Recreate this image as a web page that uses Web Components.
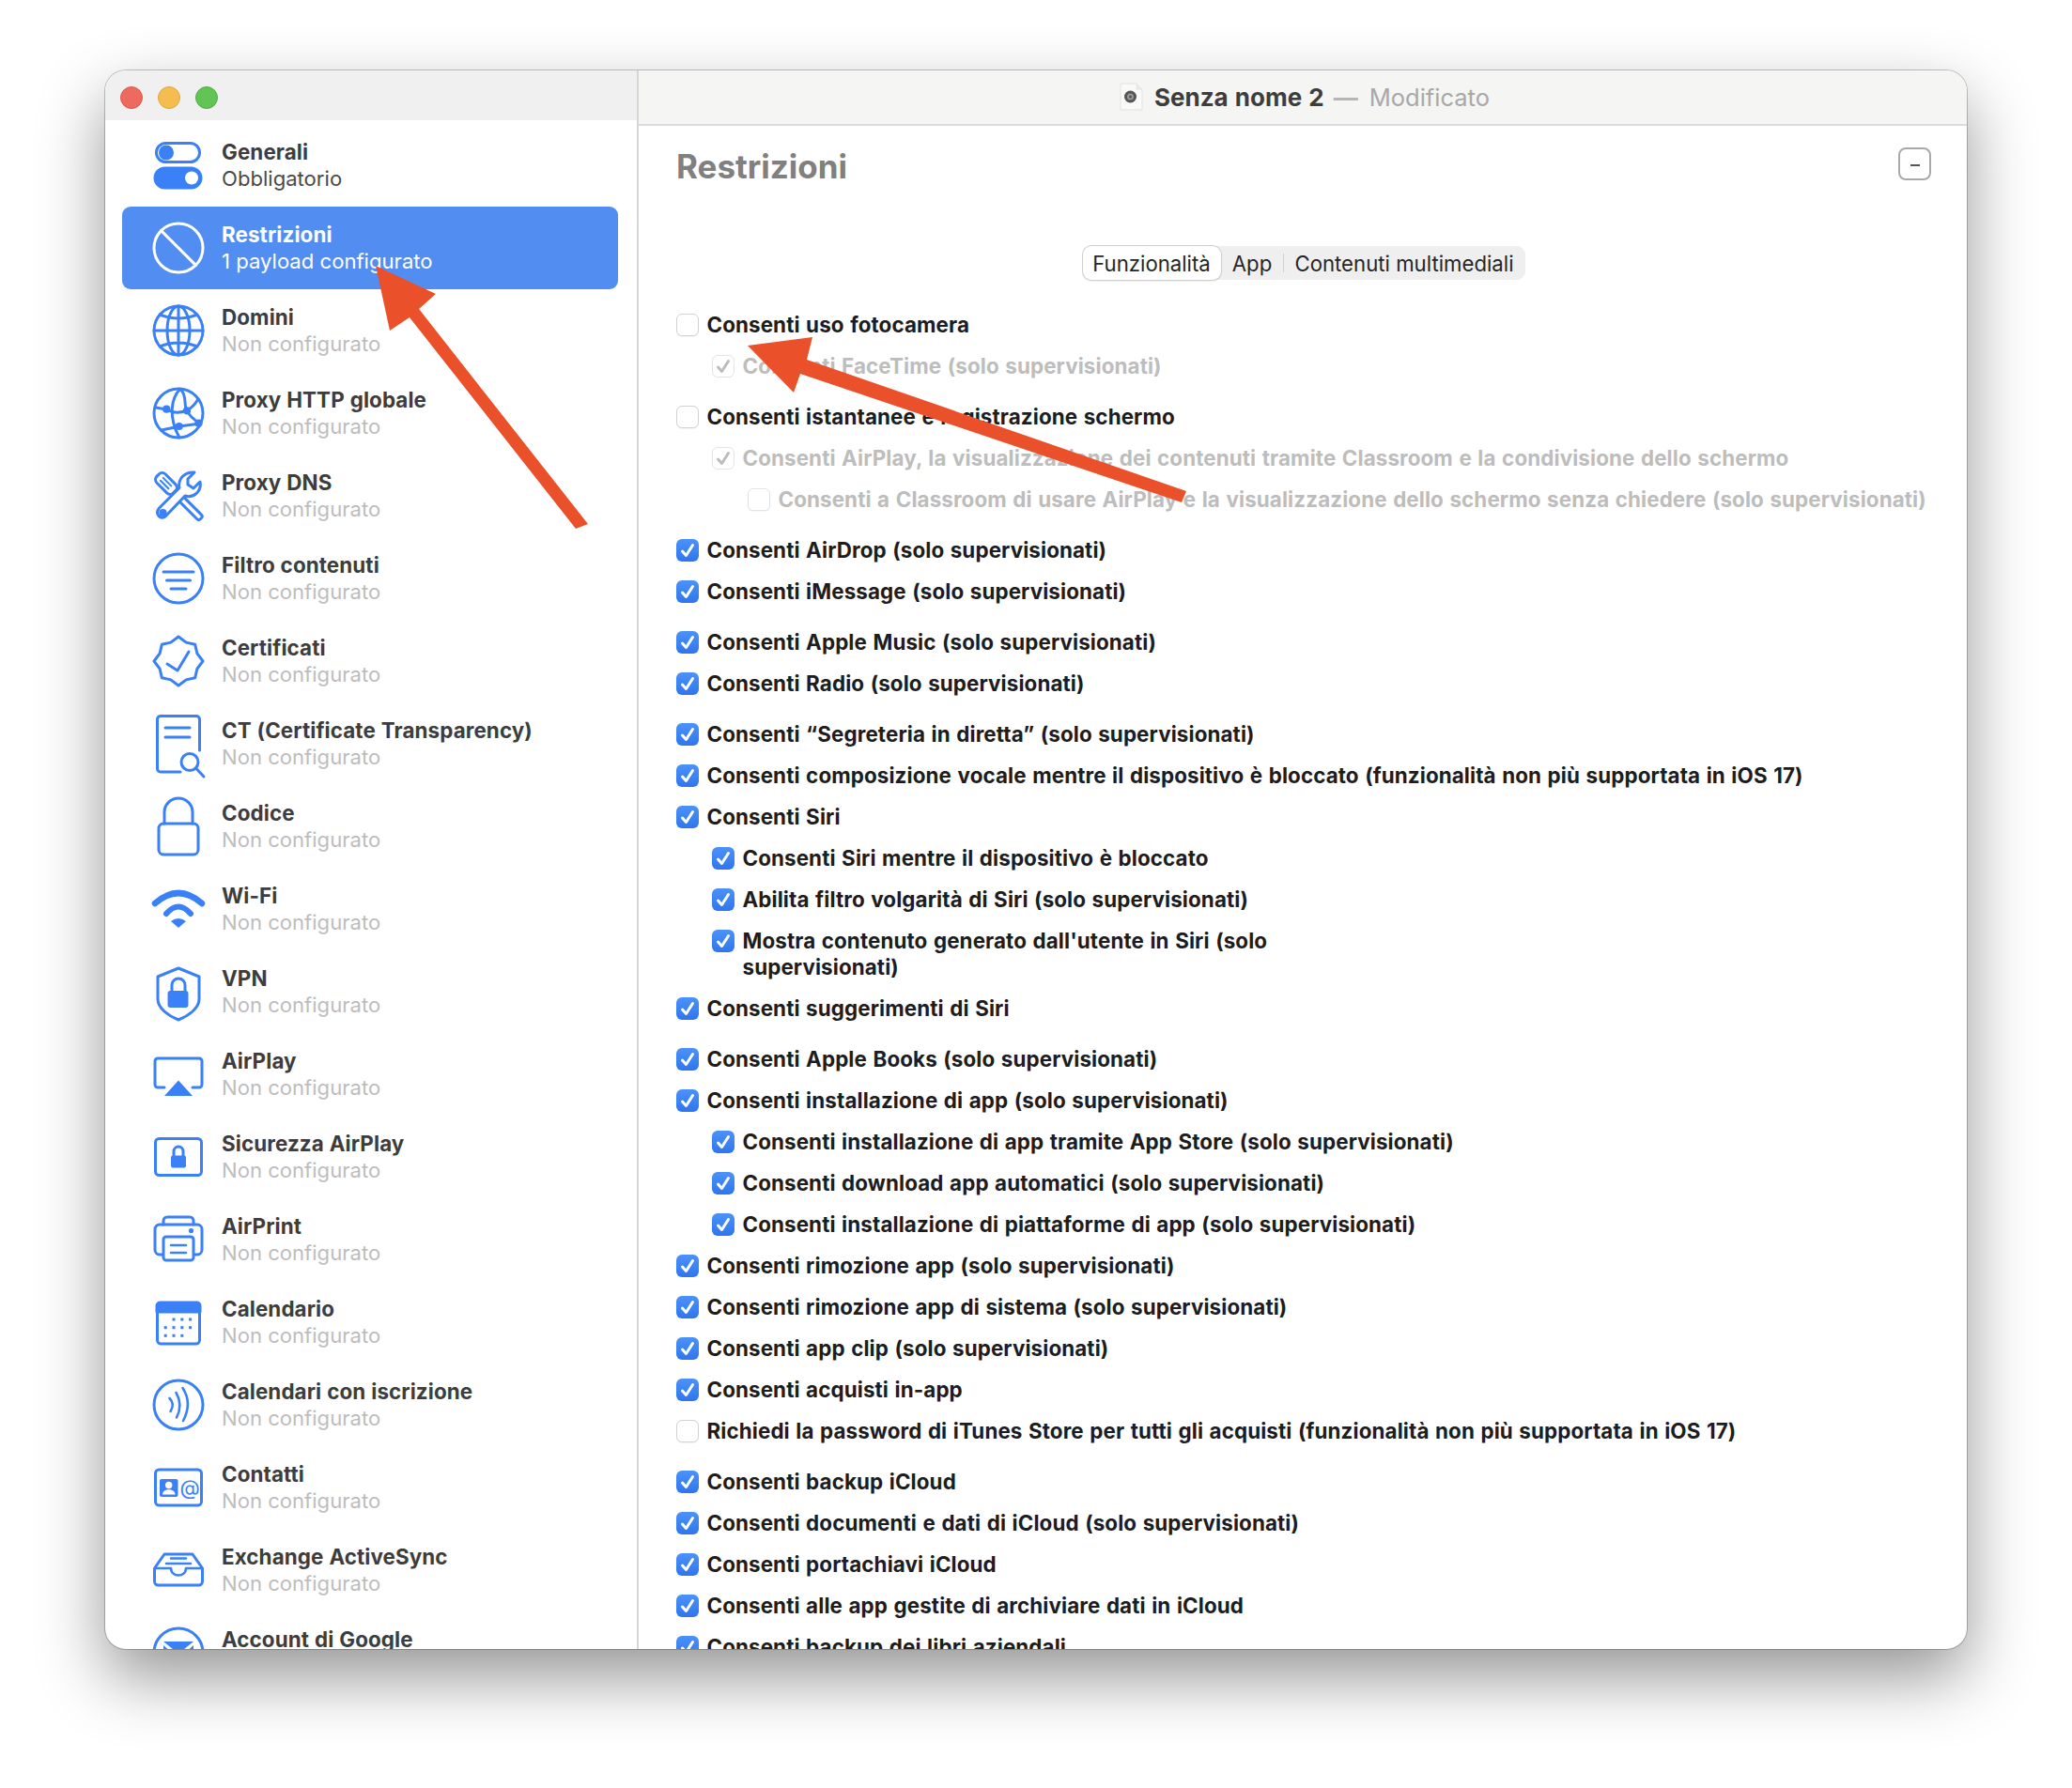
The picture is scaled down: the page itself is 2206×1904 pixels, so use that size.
<!DOCTYPE html>
<html lang="it">
<head>
<meta charset="utf-8">
<title>Senza nome 2</title>
<style>
  html, body { margin: 0; height: 1904px; background: #fff; overflow: hidden; }
  body { box-sizing: border-box; padding: 75px 0 0 112px; font-family: Inter, "Liberation Sans", sans-serif; }
</style>
</head>
<body>
<mac-window>
  <side-bar slot="side">
    <side-item icon="toggles" sub="Obbligatorio" strong>Generali</side-item>
    <side-item icon="nope" sub="1 payload configurato" selected>Restrizioni</side-item>
    <side-item icon="globe">Domini</side-item>
    <side-item icon="net">Proxy HTTP globale</side-item>
    <side-item icon="tools">Proxy DNS</side-item>
    <side-item icon="filter">Filtro contenuti</side-item>
    <side-item icon="badge">Certificati</side-item>
    <side-item icon="ct">CT (Certificate Transparency)</side-item>
    <side-item icon="lock">Codice</side-item>
    <side-item icon="wifi">Wi-Fi</side-item>
    <side-item icon="vpn">VPN</side-item>
    <side-item icon="airplay">AirPlay</side-item>
    <side-item icon="seclock">Sicurezza AirPlay</side-item>
    <side-item icon="print">AirPrint</side-item>
    <side-item icon="cal">Calendario</side-item>
    <side-item icon="subs">Calendari con iscrizione</side-item>
    <side-item icon="contact">Contatti</side-item>
    <side-item icon="tray">Exchange ActiveSync</side-item>
    <side-item icon="mail">Account di Google</side-item>
  </side-bar>
  <main-pane slot="main" heading="Restrizioni">
    <seg-control>
      <seg-item w="147" active>Funzionalità</seg-item>
      <seg-item w="67" sep>App</seg-item>
      <seg-item w="257">Contenuti multimediali</seg-item>
    </seg-control>
    <check-list>
      <check-row state="off">Consenti uso fotocamera</check-row>
      <check-row level="1" disabled>Consenti FaceTime (solo supervisionati)</check-row>
      <check-row state="off" group>Consenti istantanee e registrazione schermo</check-row>
      <check-row level="1" disabled>Consenti AirPlay, la visualizzazione dei contenuti tramite Classroom e la condivisione dello schermo</check-row>
      <check-row level="2" state="off" disabled>Consenti a Classroom di usare AirPlay e la visualizzazione dello schermo senza chiedere (solo supervisionati)</check-row>
      <check-row group>Consenti AirDrop (solo supervisionati)</check-row>
      <check-row>Consenti iMessage (solo supervisionati)</check-row>
      <check-row group>Consenti Apple Music (solo supervisionati)</check-row>
      <check-row>Consenti Radio (solo supervisionati)</check-row>
      <check-row group>Consenti “Segreteria in diretta” (solo supervisionati)</check-row>
      <check-row>Consenti composizione vocale mentre il dispositivo è bloccato (funzionalità non più supportata in iOS 17)</check-row>
      <check-row>Consenti Siri</check-row>
      <check-row level="1">Consenti Siri mentre il dispositivo è bloccato</check-row>
      <check-row level="1">Abilita filtro volgarità di Siri (solo supervisionati)</check-row>
      <check-row level="1" narrow>Mostra contenuto generato dall'utente in Siri (solo supervisionati)</check-row>
      <check-row>Consenti suggerimenti di Siri</check-row>
      <check-row group>Consenti Apple Books (solo supervisionati)</check-row>
      <check-row>Consenti installazione di app (solo supervisionati)</check-row>
      <check-row level="1">Consenti installazione di app tramite App Store (solo supervisionati)</check-row>
      <check-row level="1">Consenti download app automatici (solo supervisionati)</check-row>
      <check-row level="1">Consenti installazione di piattaforme di app (solo supervisionati)</check-row>
      <check-row>Consenti rimozione app (solo supervisionati)</check-row>
      <check-row>Consenti rimozione app di sistema (solo supervisionati)</check-row>
      <check-row>Consenti app clip (solo supervisionati)</check-row>
      <check-row>Consenti acquisti in-app</check-row>
      <check-row state="off">Richiedi la password di iTunes Store per tutti gli acquisti (funzionalità non più supportata in iOS 17)</check-row>
      <check-row group>Consenti backup iCloud</check-row>
      <check-row>Consenti documenti e dati di iCloud (solo supervisionati)</check-row>
      <check-row>Consenti portachiavi iCloud</check-row>
      <check-row>Consenti alle app gestite di archiviare dati in iCloud</check-row>
      <check-row>Consenti backup dei libri aziendali</check-row>
    </check-list>
  </main-pane>
</mac-window>
<arrow-overlay></arrow-overlay>

<script>
// Sidebar icons, all in a 56x64 box centred on the row
const ICONS = {
  toggles: `<rect x="4.500" y="8.500" width="46" height="20" rx="10"/>
    <circle cx="15" cy="18.500" r="6.500" class="f"/>
    <rect x="3" y="35" width="49" height="21" rx="10.500" class="f"/>
    <circle cx="42" cy="45.500" r="7" fill="#fff" stroke="none"/>`,
  nope: `<circle cx="28" cy="32" r="26"/><path d="M9.600 13.600 46.400 50.400"/>`,
  globe: `<circle cx="28" cy="32" r="26"/><ellipse cx="28" cy="32" rx="12" ry="26"/>
    <path d="M28 6V58M2 32H54M8 15Q28 23 48 15M8 49Q28 41 48 49"/>`,
  net: `<circle cx="28" cy="32" r="26"/>
    <path d="M30 6C20 16 17 36 29 58M30 6C38 14 33 24 37 29C40 36 46 40 51 43M4 26 15 28C22 32 30 32 37 29C41 27 46 22 49 17M10 50 29 46 51 43"/>
    <circle cx="15.300" cy="27.700" r="2.600" class="f"/><circle cx="37" cy="29.300" r="2.600" class="f"/>
    <circle cx="28.700" cy="46" r="2.600" class="f"/><circle cx="49.500" cy="42.700" r="2.600" class="f"/>`,
  tools: `<g transform="rotate(45 28 32)"><rect x="-3" y="25.500" width="25" height="13" rx="5"/>
      <rect x="22" y="29" width="40" height="6.500" rx="2.500"/><path d="M3 30H15M3 34H15" stroke-width="2"/></g>
    <path fill="#fff" d="M7.500 45 29 23.500C27 14 35 6 45 7L38 14V20L44 24 51 17C53 27 44 35 35 32L14 54C10 58 2 52 7.500 45Z"/>
    <circle cx="11.500" cy="50" r="2.600" class="f"/>`,
  filter: `<circle cx="28" cy="32" r="26"/><path d="M12 25H44M15.500 34H40.500M20 43H36"/>`,
  badge: `<path d="M28 6 36.200 12.100 45.700 14.300 47.900 23.800 54 32 47.900 40.200 45.700 49.700 36.200 51.900 28 58 19.800 51.900 10.300 49.700 8.100 40.200 2 32 8.100 23.800 10.300 14.300 19.800 12.100Z"/>
    <path d="M16 35 27 42 39 22" />`,
  ct: `<path d="M30 62H9A3.500 3.500 0 0 1 5.500 58.500V6A3.500 3.500 0 0 1 9 2.500H47A3.500 3.500 0 0 1 50.500 6V39"/>
    <path d="M14 15H40M14 25H40"/><circle cx="40" cy="51.500" r="9"/><path d="M47 58.500 55 67"/>`,
  lock: `<rect x="7" y="29" width="42" height="33" rx="5"/><path d="M13 29V17A15 15 0 0 1 43 17V29"/>`,
  wifi: `<path d="M3 26Q28 4 53 26" stroke-width="6.500"/><path d="M15 37Q28 22 41 37" stroke-width="6"/>
    <path d="M20 45Q28 39 36 45L28 52Z" class="f" stroke="none"/>`,
  vpn: `<path d="M28 7 50 16V40C50 50 38 58 28 62C18 58 6 50 6 40V16Z"/>
    <path d="M21 32V25A7 7 0 0 1 35 25V32"/><rect x="16.500" y="31" width="22" height="18" rx="3" class="f" stroke="none"/>`,
  airplay: `<path d="M13 46H6A3 3 0 0 1 3 43V18A3 3 0 0 1 6 15H50A3 3 0 0 1 53 18V43A3 3 0 0 1 50 46H43"/>
    <path d="M28 38.500 43 55H13Z" class="f" stroke="none"/>`,
  seclock: `<rect x="3.500" y="12.500" width="49" height="39" rx="4"/><path d="M23 31V26A5 5 0 0 1 33 26V31"/>
    <rect x="20" y="30.500" width="16" height="13" rx="2" class="f" stroke="none"/>`,
  print: `<path d="M12 16V12A4 4 0 0 1 16 8H40A4 4 0 0 1 44 12V16"/>
    <path d="M11 48H8A5 5 0 0 1 3 43V21A5 5 0 0 1 8 16H48A5 5 0 0 1 53 21V43A5 5 0 0 1 48 48H45"/>
    <rect x="12" y="29" width="32" height="25" rx="3"/><path d="M20 38H36M20 46H36" stroke-width="2.500"/>
    <circle cx="41.500" cy="22.500" r="2.600" class="f" stroke="none"/>`,
  cal: `<rect x="5.500" y="12" width="45" height="43" rx="4"/><path d="M5 21V14.500A3.500 3.500 0 0 1 8.500 11H47.500A3.500 3.500 0 0 1 51 14.500V21Z" class="f"/>
    <g class="f" stroke="none"><rect x="21.500" y="27.500" width="3" height="3"/><rect x="30.300" y="27.500" width="3" height="3"/><rect x="39.100" y="27.500" width="3" height="3"/>
    <rect x="12.700" y="36.200" width="3" height="3"/><rect x="21.500" y="36.200" width="3" height="3"/><rect x="30.300" y="36.200" width="3" height="3"/><rect x="39.100" y="36.200" width="3" height="3"/>
    <rect x="12.700" y="44.800" width="3" height="3"/><rect x="21.500" y="44.800" width="3" height="3"/><rect x="30.300" y="44.800" width="3" height="3"/></g>`,
  subs: `<circle cx="28" cy="32" r="26"/><path d="M18.500 25Q24.500 31 19.500 39M25.500 19Q33 32 26 45.500M32.500 14Q43 30 33 49" stroke-width="2.600"/>`,
  contact: `<rect x="3.500" y="13" width="49" height="38" rx="4"/><rect x="8" y="23" width="19.500" height="19" rx="2" class="f" stroke="none"/>
    <circle cx="17.700" cy="29.500" r="3.700" fill="#fff" stroke="none"/><path d="M11 39.500C11 32.500 24.500 32.500 24.500 39.500Z" fill="#fff" stroke="none"/>
    <text x="40" y="39.500" font-size="22" text-anchor="middle" stroke="none" class="f" font-family="Inter, sans-serif">@</text>`,
  tray: `<path d="M2.500 30 13 15H43L53.500 30V44A4 4 0 0 1 49.500 48H6.500A4 4 0 0 1 2.500 44Z"/>
    <path d="M3 30H20C20 40 36 40 36 30H53M20 19.500H36M15 25H41" stroke-width="2.600"/>`,
  mail: `<circle cx="28" cy="32" r="26"/><path d="M12 20H44L28 33Z" class="f" stroke="none"/><path d="M12 24V46H44V24L28 38Z" class="f" stroke="none"/>`
};

class MacWindow extends HTMLElement {
  constructor() {
    super();
    this.attachShadow({ mode: 'open' }).innerHTML = `
      <style>
        :host {
          display: flex;
          width: 1982px;
          height: 1681px;
          border-radius: 22px;
          overflow: hidden;
          background: #fff;
          box-shadow: 0 0 0 1px rgba(0,0,0,.22), 0 30px 70px rgba(0,0,0,.42);
        }
      </style>
      <slot name="side"></slot>
      <slot name="main"></slot>`;
  }
}

class SideBar extends HTMLElement {
  constructor() {
    super();
    this.attachShadow({ mode: 'open' }).innerHTML = `
      <style>
        :host {
          display: flex;
          flex-direction: column;
          flex: none;
          box-sizing: border-box;
          width: 568px;
          height: 100%;
          border-right: 2px solid #d6d6d6;
        }
        .bar {
          flex: none;
          display: flex;
          align-items: center;
          gap: 16px;
          box-sizing: border-box;
          height: 53px;
          padding: 4px 0 0 16px;
          background: #f0f0f0;
        }
        .bar i { width: 24px; height: 24px; border-radius: 50%; box-sizing: border-box; }
        .items { padding-top: 4px; }
      </style>
      <div class="bar">
        <i style="background:#ee6a5f;border:1px solid #d9584e"></i>
        <i style="background:#f5bd4f;border:1px solid #dea63c"></i>
        <i style="background:#61c454;border:1px solid #52ad46"></i>
      </div>
      <div class="items"><slot></slot></div>`;
  }
}

class SideItem extends HTMLElement {
  constructor() {
    super();
    const sub = this.getAttribute('sub') || 'Non configurato';
    this.attachShadow({ mode: 'open' }).innerHTML = `
      <style>
        :host {
          display: flex;
          align-items: center;
          box-sizing: border-box;
          height: 88px;
          margin: 0 20px 0 18px;
          padding-left: 32px;
          border-radius: 9px;
          color: #3a80f7;
        }
        :host([selected]) { background: #528ef2; color: #fff; }
        svg {
          flex: none;
          width: 56px;
          height: 64px;
          overflow: visible;
          fill: none;
          stroke: currentColor;
          stroke-width: 3;
          stroke-linecap: round;
          stroke-linejoin: round;
        }
        svg .f { fill: currentColor; }
        .txt { margin-left: 18px; line-height: 28px; }
        .t { font-size: 22.4px; letter-spacing: .1px; word-spacing: .5px; font-weight: 700; color: #3d3d3d; }
        .s { font-size: 22.1px; color: #bdbdbd; font-weight: 400; }
        :host([strong]) .s { color: #4a4a4a; }
        :host([selected]) .t, :host([selected]) .s { color: #fff; }
      </style>
      <svg viewBox="0 0 56 64">${ICONS[this.getAttribute('icon')] || ''}</svg>
      <div class="txt">
        <div class="t"><slot></slot></div>
        <div class="s">${sub}</div>
      </div>`;
  }
}

class MainPane extends HTMLElement {
  constructor() {
    super();
    this.attachShadow({ mode: 'open' }).innerHTML = `
      <style>
        :host {
          display: flex;
          flex-direction: column;
          flex: 1;
          min-width: 0;
          height: 100%;
        }
        .bar {
          flex: none;
          display: flex;
          align-items: center;
          justify-content: center;
          box-sizing: border-box;
          height: 59px;
          padding: 0 0 1px 4px;
          background: #f5f5f3;
          border-bottom: 2px solid #dcdcdc;
          font-size: 26px;
          word-spacing: 1px;
          color: #3d3d3d;
          font-weight: 700;
        }
        .bar svg { width: 25px; height: 30px; margin-right: 12px; }
        .dash { margin: 0 12px 0 10px; color: #b5b5b5; font-weight: 700; }
        .mod { font-size: 25.5px; color: #a8a8a8; font-weight: 400; }
        .body { flex: 1; min-height: 0; overflow: hidden; padding: 23px 38px 0 40px; }
        .head { display: flex; align-items: flex-start; justify-content: space-between; height: 35px; }
        h1 { margin: 0; font-size: 35px; line-height: 40px; font-weight: 700; color: #808080; }
        .minus {
          box-sizing: border-box;
          width: 35px;
          height: 35px;
          border: 2px solid #a9a9a9;
          border-radius: 8px;
          display: flex;
          align-items: center;
          justify-content: center;
          background: #fff;
        }
        .minus b { width: 10px; height: 2px; background: #555; margin-top: 3px; }
        .seg { display: flex; justify-content: center; margin: 70px 0 26px; }
      </style>
      <div class="bar">
        <svg viewBox="0 0 25 30">
          <path d="M1 1H18L24 7V29H1Z" fill="#fafafa" stroke="#e2e2e2"/>
          <path d="M18 1V7H24" fill="#ececec" stroke="#e2e2e2"/>
          <circle cx="11.500" cy="15" r="6.500" fill="#555"/><circle cx="11.500" cy="15" r="3.500" fill="#999"/><circle cx="11.500" cy="15" r="1.500" fill="#555"/>
        </svg>
        <span>Senza nome 2</span><span class="dash">—</span><span class="mod">Modificato</span>
      </div>
      <div class="body">
        <div class="head">
          <h1>${this.getAttribute('heading')}</h1>
          <div class="minus"><b></b></div>
        </div>
        <div class="seg"><slot name="seg"></slot></div>
        <slot></slot>
      </div>`;
  }
  connectedCallback() {
    const seg = this.querySelector('seg-control');
    if (seg) seg.slot = 'seg';
  }
}

class SegControl extends HTMLElement {
  constructor() {
    super();
    this.attachShadow({ mode: 'open' }).innerHTML = `
      <style>
        :host { display: inline-flex; height: 36px; border-radius: 9px; background: #efefef; }
      </style>
      <slot></slot>`;
  }
}

class SegItem extends HTMLElement {
  constructor() {
    super();
    this.attachShadow({ mode: 'open' }).innerHTML = `
      <style>
        :host {
          display: flex;
          align-items: center;
          justify-content: center;
          box-sizing: border-box;
          width: ${this.getAttribute('w')}px;
          font-size: 22.2px;
          color: #262626;
          white-space: nowrap;
        }
        :host([active]) {
          background: #fff;
          border-radius: 9px;
          box-shadow: 0 0 0 1px #cfcfcf, 0 1px 2px rgba(0,0,0,.2);
        }
        :host([sep]) { position: relative; }
        :host([sep])::after {
          content: "";
          position: absolute;
          right: 0;
          top: 8px;
          bottom: 8px;
          width: 1px;
          background: #d2d2d2;
        }
      </style>
      <slot></slot>`;
  }
}

class CheckList extends HTMLElement {
  constructor() {
    super();
    this.attachShadow({ mode: 'open' }).innerHTML = `
      <style>:host { display: flex; flex-direction: column; }</style>
      <slot></slot>`;
  }
}

class CheckRow extends HTMLElement {
  constructor() {
    super();
    const level = Number(this.getAttribute('level') || 0);
    const on = this.getAttribute('state') !== 'off';
    this.attachShadow({ mode: 'open' }).innerHTML = `
      <style>
        :host {
          display: flex;
          align-items: flex-start;
          flex: none;
          min-height: 44px;
          margin-left: ${level * 38}px;
          font-size: 22.4px;
          letter-spacing: .1px;
          word-spacing: 1.1px;
          line-height: 28px;
          font-weight: 700;
          color: #1d1d1f;
        }
        :host([group]) { margin-top: 10px; }
        :host([disabled]) { color: #bdbdbd; }
        :host([narrow]) .txt { max-width: 580px; }
        .box {
          flex: none;
          box-sizing: border-box;
          width: 24px;
          height: 24px;
          margin: 10px 8.500px 0 0;
          border-radius: 6px;
          display: flex;
          align-items: center;
          justify-content: center;
          background: linear-gradient(#4b92f9, #2f76ee);
        }
        .box.off { background: #fff; border: 1px solid #d2d2d2; box-shadow: 0 1px 1px rgba(0,0,0,.05); }
        :host([disabled]) .box { background: #fff; border: 1px solid #e3e3e3; }
        svg { width: 16px; height: 16px; fill: none; stroke: #fff; stroke-width: 3; stroke-linecap: round; stroke-linejoin: round; }
        :host([disabled]) svg { stroke: #bcbcbc; stroke-width: 3; }
        .txt { padding-top: 8px; padding-bottom: 8px; }
      </style>
      <span class="box ${on ? '' : 'off'}">${on ? '<svg viewBox="0 0 16 16"><path d="M2.500 9 6.500 13.500 13.500 2.500"/></svg>' : ''}</span>
      <span class="txt"><slot></slot></span>`;
  }
}

// The two annotation arrows lying over the window
class ArrowOverlay extends HTMLElement {
  constructor() {
    super();
    this.attachShadow({ mode: 'open' }).innerHTML = `
      <style>
        :host { position: absolute; left: 0; top: 0; width: 2206px; height: 1904px; pointer-events: none; }
        svg { display: block; }
      </style>
      <svg width="2206" height="1904" fill="#ea5029">
        <polygon points="400,283 464,313 446,329 626,558 613,563 436,338 415,352"/>
        <polygon points="796,368 865,359 859,383 1263,523 1258,535 852,398 845,418"/>
      </svg>`;
  }
}

customElements.define('mac-window', MacWindow);
customElements.define('side-bar', SideBar);
customElements.define('side-item', SideItem);
customElements.define('main-pane', MainPane);
customElements.define('seg-control', SegControl);
customElements.define('seg-item', SegItem);
customElements.define('check-list', CheckList);
customElements.define('check-row', CheckRow);
customElements.define('arrow-overlay', ArrowOverlay);
</script>
</body>
</html>
